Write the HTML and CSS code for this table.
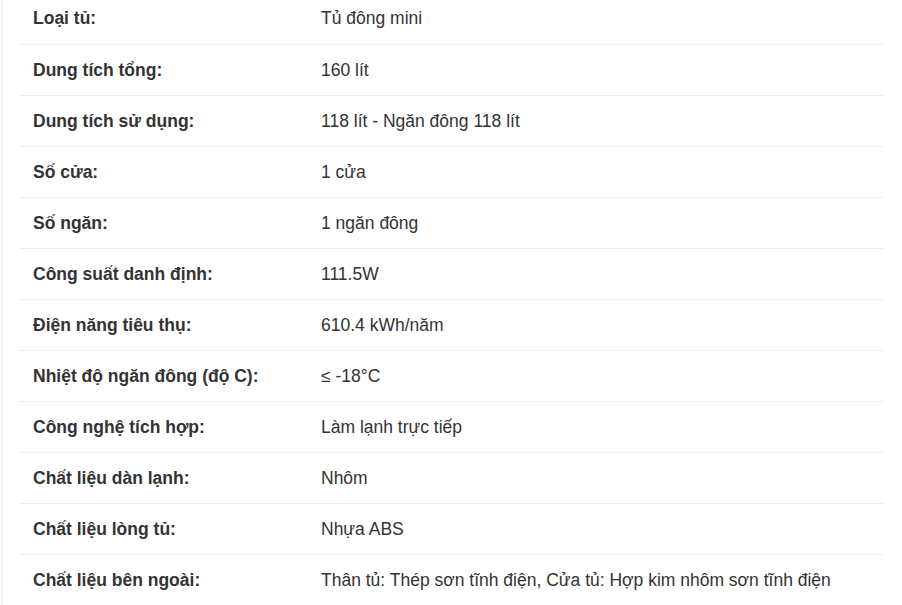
FILE: index.html
```html
<!DOCTYPE html>
<html lang="vi">
<head>
<meta charset="utf-8">
<link rel="stylesheet" href="styles.css">
</head>
<body>
<div class="panel">
  <table class="specs">
    <tr><th>Loại tủ:</th><td>Tủ đông mini</td></tr>
    <tr><th>Dung tích tổng:</th><td>160 lít</td></tr>
    <tr><th>Dung tích sử dụng:</th><td>118 lít - Ngăn đông 118 lít</td></tr>
    <tr><th>Số cửa:</th><td>1 cửa</td></tr>
    <tr><th>Số ngăn:</th><td>1 ngăn đông</td></tr>
    <tr><th>Công suất danh định:</th><td>111.5W</td></tr>
    <tr><th>Điện năng tiêu thụ:</th><td>610.4 kWh/năm</td></tr>
    <tr><th>Nhiệt độ ngăn đông (độ C):</th><td>≤ -18°C</td></tr>
    <tr><th>Công nghệ tích hợp:</th><td>Làm lạnh trực tiếp</td></tr>
    <tr><th>Chất liệu dàn lạnh:</th><td>Nhôm</td></tr>
    <tr><th>Chất liệu lòng tủ:</th><td>Nhựa ABS</td></tr>
    <tr><th>Chất liệu bên ngoài:</th><td>Thân tủ: Thép sơn tĩnh điện, Cửa tủ: Hợp kim nhôm sơn tĩnh điện</td></tr>
  </table>
</div>
</body>
</html>
```
FILE: styles.css
```css
html, body {
  margin: 0;
  padding: 0;
  background: #fff;
}
body {
  font-family: "Liberation Sans", Arial, sans-serif;
  color: #333;
  overflow: hidden;
}
.panel {
  margin-left: 1px;
  border-left: 2px solid #f3f3f3;
  padding-left: 17px;
  margin-top: -7px;
  width: 863px;
}
.specs {
  width: 863px;
  border-collapse: collapse;
  font-size: 17.5px;
}
.specs tr {
  border-bottom: 1px solid #eee;
}
.specs th, .specs td {
  text-align: left;
  vertical-align: middle;
  height: 51px;
  padding: 0 13px;
  line-height: 24px;
  box-sizing: border-box;
}
.specs th {
  width: 288px;
  font-weight: bold;
  color: #333;
}
.specs td {
  font-weight: normal;
  color: #333;
}
```
